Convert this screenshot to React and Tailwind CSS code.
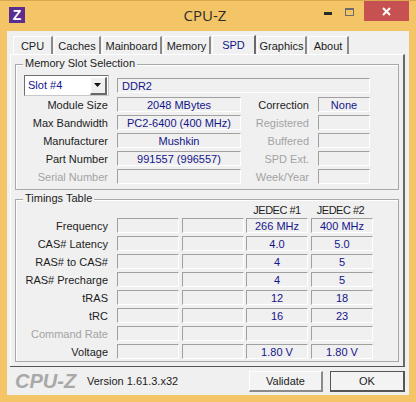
const FONT = "font-['Liberation_Sans',Arial,sans-serif]";

const tabs = [
  { name: "CPU", w: "w-[40px]" },
  { name: "Caches", w: "w-[47px]" },
  { name: "Mainboard", w: "w-[60px]" },
  { name: "Memory", w: "w-[48px]" },
  { name: "SPD", w: "w-[44px]", active: true },
  { name: "Graphics", w: "w-[50px]" },
  { name: "About", w: "w-[41px]" },
];

const moduleRows = [
  { label: "Module Size", value: "2048 MBytes", side: "Correction", sideValue: "None" },
  { label: "Max Bandwidth", value: "PC2-6400 (400 MHz)", side: "Registered", muted: true },
  { label: "Manufacturer", value: "Mushkin", side: "Buffered", muted: true },
  { label: "Part Number", value: "991557 (996557)", side: "SPD Ext.", muted: true },
  { label: "Serial Number", value: "", side: "Week/Year", muted: true, labelMuted: true },
];

const timingRows = [
  { label: "Frequency", a: "266 MHz", b: "400 MHz" },
  { label: "CAS# Latency", a: "4.0", b: "5.0" },
  { label: "RAS# to CAS#", a: "4", b: "5" },
  { label: "RAS# Precharge", a: "4", b: "5" },
  { label: "tRAS", a: "12", b: "18" },
  { label: "tRC", a: "16", b: "23" },
  { label: "Command Rate", a: "", b: "", muted: true },
  { label: "Voltage", a: "1.80 V", b: "1.80 V" },
];

function Field({ children, className = "" }) {
  return (
    <div
      className={`h-[15px] pt-px flex items-center justify-center border-t border-l border-t-[#a0a0a0] border-l-[#a0a0a0] border-b border-r border-b-white border-r-white text-[#14148a] text-[11px] leading-none whitespace-nowrap ${className}`}
    >
      {children}
    </div>
  );
}

function Label({ children, muted, className = "" }) {
  return (
    <div
      className={`h-[15px] pt-px text-[11px] leading-[15px] text-right whitespace-nowrap ${muted ? "text-[#a3a3a3]" : "text-[#1c1c1c]"} ${className}`}
    >
      {children}
    </div>
  );
}

function Group({ title, className = "", children }) {
  return (
    <div className={`relative border border-[#a8a8a8] shadow-[inset_1px_1px_0_#fff] ${className}`}>
      <span className="absolute left-[7px] -top-[9px] bg-[#f0f0f0] px-[2px] text-[11px] leading-[15px] text-[#1c1c1c]">
        {title}
      </span>
      {children}
    </div>
  );
}

function MemorySlot() {
  return (
    <Group title="Memory Slot Selection" className="h-[126px] pt-[10px] pl-[8px]">
      <div className="flex items-center h-[21px] mb-px">
        <div className="w-[85px] h-[21px] flex items-center justify-between bg-white border border-[#6f6f6f] border-b-[#c8c8c8] border-r-[#c8c8c8] pl-[3px] pr-px text-[11px] text-[#14148a]">
          <span>Slot #4</span>
          <div className="w-[17px] h-[18px] flex items-center justify-center bg-[#f0f0f0] border-l border-t border-white border-r-2 border-b-2 border-r-[#696969] border-b-[#696969]">
            <svg width="8" height="4" viewBox="0 0 8 4"><path d="M0 0h7L3.5 4z" fill="#111" /></svg>
          </div>
        </div>
        <Field className="ml-[8px] w-[253px] justify-start pl-[4px]">DDR2</Field>
      </div>
      <div className="flex flex-col gap-y-[3px] -ml-[8px]">
        {moduleRows.map((r) => (
          <div key={r.label} className="flex items-center">
            <Label muted={r.labelMuted} className="w-[92px]">{r.label}</Label>
            <Field className="ml-[9px] w-[124px]">{r.value}</Field>
            <Label muted={r.muted} className="w-[68px]">{r.side}</Label>
            <Field className="ml-[9px] w-[52px]">{r.sideValue}</Field>
          </div>
        ))}
      </div>
    </Group>
  );
}

function Timings() {
  return (
    <Group title="Timings Table" className="h-[163px] mt-[9px] pt-[2px]">
      <div className="flex h-[16px] items-center text-[11px] tracking-[-0.5px] text-[#1c1c1c]">
        <div className="w-[230px]" />
        <div className="w-[62px] text-center">JEDEC #1</div>
        <div className="w-[65px] text-center">JEDEC #2</div>
      </div>
      <div className="flex flex-col gap-y-[3px]">
        {timingRows.map((r) => (
          <div key={r.label} className="flex items-center">
            <Label muted={r.muted} className="w-[92px]">{r.label}</Label>
            <Field className="ml-[9px] w-[62px]" />
            <Field className="ml-[3px] w-[62px]" />
            <Field className="ml-[2px] w-[62px]">{r.a}</Field>
            <Field className="ml-[3px] w-[62px]">{r.b}</Field>
          </div>
        ))}
      </div>
    </Group>
  );
}

export default function App() {
  return (
    <div className={`w-[416px] h-[402px] bg-[#f3c566] border-t border-[#d9a94f] flex flex-col overflow-hidden ${FONT}`}>
      <div className="h-[30px] flex items-start relative">
        <div className="ml-[9px] mt-[6px] w-[16px] h-[16px] bg-[#5b2d91] flex items-center justify-center text-white font-bold text-[14px] leading-none">
          Z
        </div>
        <div className="absolute left-[0px] w-[410px] top-[4px] text-center text-[#2d2d2d] text-[15px] leading-[20px] font-['Open_Sans',sans-serif]">
          CPU-Z
        </div>
        <div className="ml-auto mr-[7px] flex items-start">
          <div className="w-[8px] h-[3px] bg-[#2a2a2a] mt-[11px] mr-[13px]" />
          <div className="w-[9px] h-[8px] border border-[#6b6b6b] border-t-2 mt-[7px] mr-[10px]" />
          <div className="w-[45px] h-[20px] bg-[#c75050] flex items-center justify-center">
            <svg width="9" height="9" viewBox="0 0 9 9"><path d="M1 1l7 7M8 1L1 8" stroke="#fff" strokeWidth="2" /></svg>
          </div>
        </div>
      </div>

      <div className="mx-[7px] h-[364px] bg-[#f0f0f0] flex flex-col pl-[3px] pr-[4px]">
        <div className="h-[23px] flex items-end pl-[3px] gap-px">
          {tabs.map((t) => (
            <div
              key={t.name}
              className={`${t.w} text-center text-[11px] leading-[19px] border-t border-l border-white ${
                t.active
                  ? "h-[19px] text-[#14148a] border-r-2 border-r-[#696969]"
                  : "h-[18px] text-[#1c1c1c] border-r-2 border-r-[#8a8a8a]"
              }`}
            >
              {t.name}
            </div>
          ))}
        </div>
        <div className="h-[312px] border-t border-l border-white border-r-2 border-r-[#696969] pt-[9px] px-[4px]">
          <MemorySlot />
          <Timings />
        </div>
        <div className="border-t border-[#555] flex items-center flex-1 pl-[5px]">
          <span className="w-[72px] italic font-bold text-[20px] leading-none text-[#a8a8a8]">CPU-Z</span>
          <span className="w-[162px] text-[11px] text-[#1c1c1c]">Version 1.61.3.x32</span>
          <div className="mt-px w-[74px] h-[21px] flex items-center justify-center text-[11px] text-[#1c1c1c] border border-t-white border-l-white border-b-2 border-r-2 border-b-[#8a8a8a] border-r-[#8a8a8a] bg-[#f3f3f3]">
            Validate
          </div>
          <div className="mt-px ml-[7px] w-[75px] h-[21px] flex items-center justify-center text-[11px] text-[#1c1c1c] border border-[#555] border-b-2 border-r-2 bg-[#f3f3f3]">
            OK
          </div>
        </div>
      </div>
    </div>
  );
}
